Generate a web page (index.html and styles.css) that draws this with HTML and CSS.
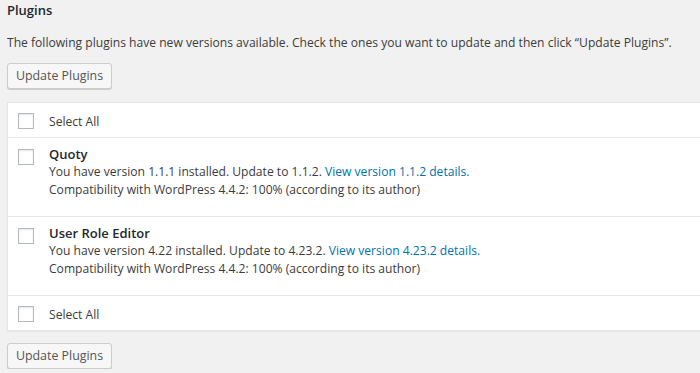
FILE: index.html
```html
<!DOCTYPE html>
<html>
<head>
<meta charset="utf-8">
<link rel="stylesheet" href="styles.css">
</head>
<body>
<div class="wrap">
  <h2 class="title">Plugins</h2>
  <p class="intro">The following plugins have new versions available. Check the ones you want to update and then click “Update Plugins”.</p>
  <div class="actions"><button class="button">Update Plugins</button></div>
  <div class="table">
    <div class="row select-row">
      <span class="check"></span>
      <span class="label">Select All</span>
    </div>
    <div class="row plugin-row">
      <span class="check"></span>
      <div class="info">
        <div class="name">Quoty</div>
        <div>You have version 1.1.1 installed. Update to 1.1.2. <a class="link" href="#">View version 1.1.2 details.</a></div>
        <div>Compatibility with WordPress 4.4.2: 100% (according to its author)</div>
      </div>
    </div>
    <div class="row plugin-row">
      <span class="check"></span>
      <div class="info">
        <div class="name">User Role Editor</div>
        <div>You have version 4.22 installed. Update to 4.23.2. <a class="link" href="#">View version 4.23.2 details.</a></div>
        <div>Compatibility with WordPress 4.4.2: 100% (according to its author)</div>
      </div>
    </div>
    <div class="row select-row">
      <span class="check"></span>
      <span class="label">Select All</span>
    </div>
  </div>
  <div class="actions bottom"><button class="button">Update Plugins</button></div>
</div>
</body>
</html>
```

FILE: styles.css
```css
html, body {
  margin: 0;
  padding: 0;
  background: #f1f1f1;
}
body {
  font-family: "Open Sans", "Noto Sans", sans-serif;
  font-size: 12.1px;
  color: #3c3c3c;
  overflow: hidden;
}
.wrap {
  padding: 0 0 0 7px;
}
.title {
  margin: 0;
  padding-top: 0;
  font-size: 13px;
  font-weight: 600;
  line-height: 20px;
  color: #23282d;
}
.intro {
  margin: 14px 0 0;
  line-height: 18px;
  white-space: nowrap;
}
.actions {
  margin-top: 11px;
}
.actions.bottom {
  margin-top: 12px;
}
.button {
  display: inline-block;
  width: 105px;
  height: 26px;
  margin: 0;
  padding: 0 0 1px;
  font-family: "Open Sans", "Noto Sans", sans-serif;
  font-size: 12.4px;
  line-height: 22px;
  color: #555;
  background: #f7f7f7;
  border: 1px solid #cccccc;
  border-radius: 3px;
  box-shadow: 0 1px 0 #cccccc;
  box-sizing: border-box;
  text-align: center;
  cursor: pointer;
}
.table {
  margin-top: 13px;
  background: #fff;
  border: 1px solid #e5e5e5;
  border-right: 0;
  box-shadow: 0 1px 1px rgba(0,0,0,0.04);
}
.row {
  display: flex;
  align-items: flex-start;
  padding: 0 0 0 10px;
}
.row + .row {
  border-top: 1px solid #e9e9e9;
}
.select-row {
  height: 34px;
  align-items: center;
}
.select-row .label {
  padding-top: 3px;
}
.select-row .check {
  margin-top: 2px;
}
.plugin-row {
  padding-top: 7px;
  padding-bottom: 17px;
}
.check {
  display: block;
  flex: none;
  width: 14px;
  height: 14px;
  border: 1px solid #b4b9be;
  background: #fff;
  box-shadow: inset 0 1px 2px rgba(0,0,0,0.1);
  margin-right: 15px;
}
.plugin-row .check {
  margin-top: 4px;
}
.label {
  line-height: 18px;
}
.info {
  line-height: 18px;
}
.name {
  font-weight: 600;
  font-size: 13px;
  color: #23282d;
}
.link {
  color: #0073aa;
  text-decoration: none;
}
```
